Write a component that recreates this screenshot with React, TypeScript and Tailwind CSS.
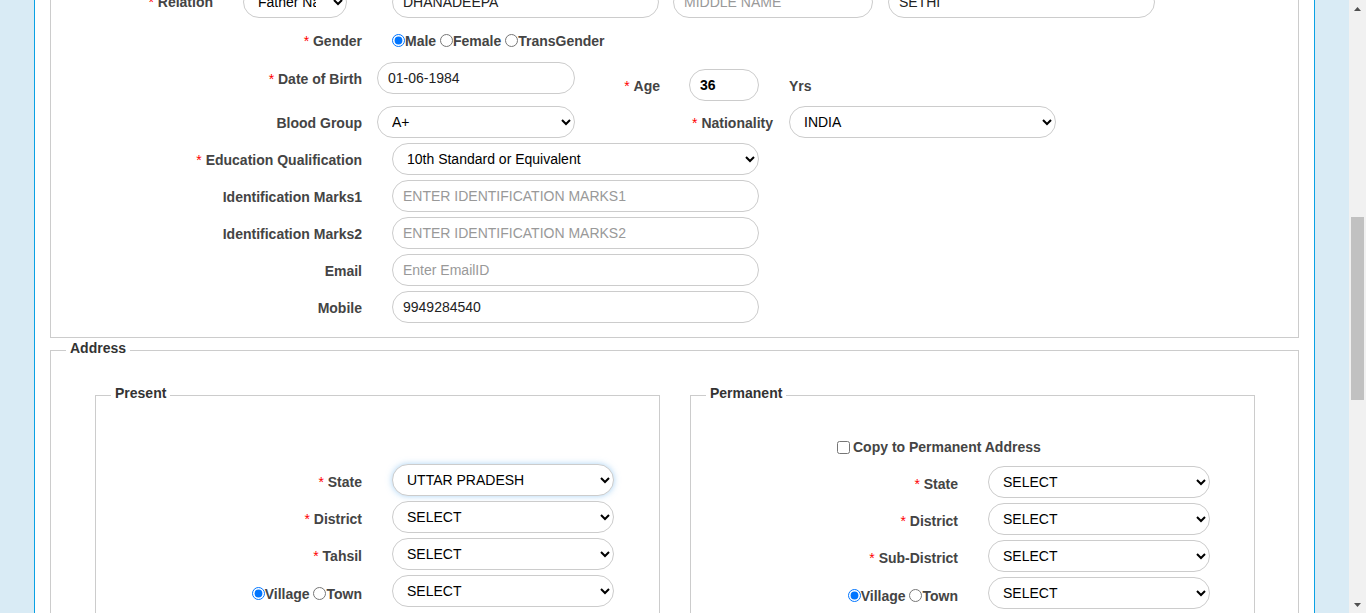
import React from "react";

type LabelProps = {
  text: string;
  req?: boolean;
  className?: string;
};

function Label({ text, req, className = "" }: LabelProps) {
  return (
    <label
      className={`block h-[32px] shrink-0 text-right text-[14px] font-bold leading-[32px] text-[#444] ${className}`}
    >
      {req && <span className="font-normal text-[#ff0000]">* </span>}
      {text}
    </label>
  );
}

const inputCls =
  "h-[32px] shrink-0 rounded-[16px] border border-[#ccc] bg-white px-[10px] text-[14px] text-[#222] outline-none placeholder:text-[#999]";
const selectCls =
  "h-[32px] shrink-0 rounded-[16px] border border-[#ccc] bg-white pl-[10px] text-[14px] text-black outline-none";

function Radio({ name, checked }: { name: string; checked?: boolean }) {
  return (
    <input
      type="radio"
      name={name}
      defaultChecked={checked}
      className="m-0 h-[13px] w-[13px] align-[-1px]"
    />
  );
}

function Fieldset({
  legend,
  className = "",
  children,
}: {
  legend: string;
  className?: string;
  children: React.ReactNode;
}) {
  return (
    <fieldset className={`min-w-0 border border-[#ccc] ${className}`}>
      <legend className="ml-[15px] px-[4px] pb-[4px] text-[14px] font-bold leading-[20px] text-[#333]">
        {legend}
      </legend>
      {children}
    </fieldset>
  );
}

function AddressRow({
  label,
  value = "SELECT",
  labelWidth,
  focused,
}: {
  label: string;
  value?: string;
  labelWidth: string;
  focused?: boolean;
}) {
  return (
    <div className="mt-[5px] flex items-center first:mt-0">
      <Label req text={label} className={`${labelWidth} pt-[2px]`} />
      <select
        defaultValue={value}
        className={`${selectCls} ml-[30px] w-[222px] ${
          focused ? "border-[#b9d3ea] shadow-[0_0_6px_rgba(102,175,233,0.55)]" : ""
        }`}
      >
        <option>{value}</option>
      </select>
    </div>
  );
}

function VillageTown({ name, labelWidth }: { name: string; labelWidth: string }) {
  return (
    <div className="mt-[5px] flex items-center">
      <div
        className={`flex h-[32px] shrink-0 items-center justify-end text-[14px] font-bold text-[#444] ${labelWidth}`}
      >
        <span className="mt-[6px] leading-[20px]">
          <Radio name={name} checked />
          Village <Radio name={name} />
          Town
        </span>
      </div>
      <select defaultValue="SELECT" className={`${selectCls} ml-[30px] w-[222px]`}>
        <option>SELECT</option>
      </select>
    </div>
  );
}

export default function App() {
  return (
    <div className="flex h-[613px] w-full overflow-hidden bg-[#d9ebf5] font-['Liberation_Sans',Arial,sans-serif]">
      <div className="w-[34px] shrink-0" />

      {/* main white panel */}
      <div className="w-[1281px] shrink-0 border-x border-[#0aa1e4] bg-white">
        {/* personal details (scrolled, top is off screen) */}
        <div className="mx-[15px] -mt-[40px] border border-[#ccc] pb-[14px] pt-[25px]">
          <div className="flex h-[32px] items-center">
            <Label req text="Relation" className="w-[162px]" />
            <select defaultValue="Father Name" className={`${selectCls} ml-[30px] w-[104px] pr-[14px]`}>
              <option>Father Name</option>
            </select>
            <input className={`${inputCls} ml-[45px] w-[267px]`} defaultValue="DHANADEEPA" />
            <input className={`${inputCls} ml-[14px] w-[200px]`} placeholder="MIDDLE NAME" />
            <input className={`${inputCls} ml-[15px] w-[267px]`} defaultValue="SETHI" />
          </div>

          <div className="mt-[13px] flex h-[20px] items-center">
            <label className="block w-[311px] shrink-0 text-right text-[14px] font-bold text-[#444]">
              <span className="font-normal text-[#ff0000]">* </span>Gender
            </label>
            <span className="ml-[30px] text-[14px] font-bold text-[#444]">
              <Radio name="gender" checked />
              Male <Radio name="gender" />
              Female <Radio name="gender" />
              TransGender
            </span>
          </div>

          <div className="mt-[11px] flex items-start">
            <Label req text="Date of Birth" className="w-[311px] pt-[1px]" />
            <input className={`${inputCls} ml-[15px] w-[198px]`} defaultValue="01-06-1984" />
            <div className="mt-[7px] flex items-center">
              <Label req text="Age" className="w-[85px] pt-[1px]" />
              <input className={`${inputCls} ml-[29px] w-[70px] font-bold text-black`} defaultValue="36" />
              <span className="ml-[30px] mt-[2px] text-[14px] font-bold text-[#444]">Yrs</span>
            </div>
          </div>

          <div className="mt-[5px] flex items-center">
            <Label text="Blood Group" className="w-[311px] pt-[1px]" />
            <select defaultValue="A+" className={`${selectCls} ml-[15px] w-[198px]`}>
              <option>A+</option>
            </select>
            <Label req text="Nationality" className="w-[198px] pt-[1px]" />
            <select defaultValue="INDIA" className={`${selectCls} ml-[16px] w-[267px]`}>
              <option>INDIA</option>
            </select>
          </div>

          <div className="mt-[5px] flex items-center">
            <Label req text="Education Qualification" className="w-[311px] pt-[1px]" />
            <select
              defaultValue="10th Standard or Equivalent"
              className={`${selectCls} ml-[30px] w-[367px]`}
            >
              <option>10th Standard or Equivalent</option>
            </select>
          </div>

          {[
            { label: "Identification Marks1", ph: "ENTER IDENTIFICATION MARKS1" },
            { label: "Identification Marks2", ph: "ENTER IDENTIFICATION MARKS2" },
            { label: "Email", ph: "Enter EmailID" },
          ].map((r) => (
            <div key={r.label} className="mt-[5px] flex items-center">
              <Label text={r.label} className="w-[311px] pt-[1px]" />
              <input className={`${inputCls} ml-[30px] w-[367px]`} placeholder={r.ph} />
            </div>
          ))}

          <div className="mt-[5px] flex items-center">
            <Label text="Mobile" className="w-[311px] pt-[1px]" />
            <input className={`${inputCls} ml-[30px] w-[367px]`} defaultValue="9949284540" />
          </div>
        </div>

        {/* address */}
        <Fieldset legend="Address" className="mx-[15px]">
          <div className="grid grid-cols-2 gap-[30px] pb-[30px] pl-[44px] pr-[43px] pt-[21px]">
            <Fieldset legend="Present">
              <div className="pb-[30px] pt-[57px]">
                <AddressRow label="State" value="UTTAR PRADESH" labelWidth="w-[266px]" focused />
                <AddressRow label="District" labelWidth="w-[266px]" />
                <AddressRow label="Tahsil" labelWidth="w-[266px]" />
                <VillageTown name="presentArea" labelWidth="w-[266px]" />
              </div>
            </Fieldset>

            <Fieldset legend="Permanent">
              <div className="pb-[30px] pt-[30px]">
                <label className="flex h-[20px] items-center pl-[146px] text-[14px] font-bold text-[#444]">
                  <input type="checkbox" className="m-0 mr-[3px] h-[13px] w-[13px]" />
                  Copy to Permanent Address
                </label>
                <div className="mt-[9px]">
                  <AddressRow label="State" labelWidth="w-[267px]" />
                  <AddressRow label="District" labelWidth="w-[267px]" />
                  <AddressRow label="Sub-District" labelWidth="w-[267px]" />
                  <VillageTown name="permanentArea" labelWidth="w-[267px]" />
                </div>
              </div>
            </Fieldset>
          </div>
        </Fieldset>
      </div>

      <div className="w-[34px] shrink-0" />

      {/* page scrollbar */}
      <div className="flex w-[17px] shrink-0 flex-col bg-[#f1f1f1]">
        <div className="flex h-[17px] items-center justify-center">
          <svg width="7" height="4" viewBox="0 0 7 4">
            <path d="M3.5 0L7 4H0Z" fill="#505050" />
          </svg>
        </div>
        <div className="mx-[2px] mt-[200px] h-[183px] bg-[#c1c1c1]" />
        <div className="flex-1" />
        <div className="flex h-[17px] items-center justify-center">
          <svg width="7" height="4" viewBox="0 0 7 4">
            <path d="M0 0H7L3.5 4Z" fill="#505050" />
          </svg>
        </div>
      </div>
    </div>
  );
}
